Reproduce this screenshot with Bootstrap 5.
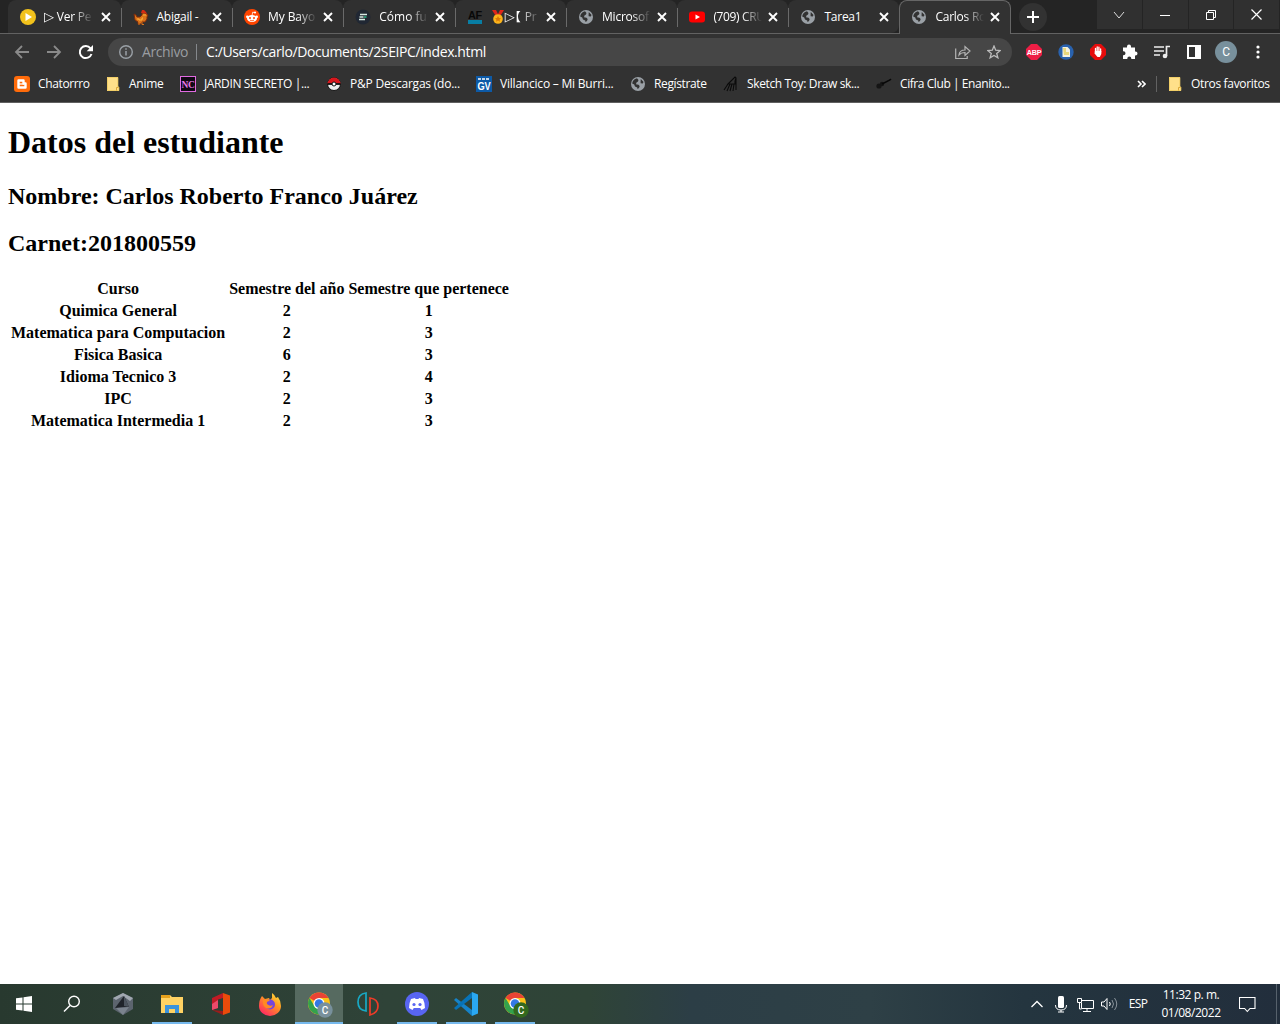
<!DOCTYPE html>
<html lang="es">
<head>
<meta charset="utf-8">
<title>Carlos Roberto Franco</title>
<link rel="stylesheet" href="https://cdn.jsdelivr.net/npm/bootstrap@5.3.0/dist/css/bootstrap.min.css">
<style>
body{width:1280px;height:1024px;font-family:"Open Sans","Noto Sans",sans-serif;font-size:12px;line-height:16px;color:#fff;background:#fff;letter-spacing:-.25px}
svg{display:block;flex:none}
.strip{height:34px;background:#242424;padding-left:8px;box-shadow:inset 0 -1px #626262}
.tab{width:111.4px;height:33px;background:#303030;border-radius:8px 8px 0 0;padding:0 10px 0 12px}
.tab::after{content:"";position:absolute;right:-1px;top:8px;width:1px;height:19px;background:#6a6a6a;z-index:1}
.tab.pre::after,.tab.current::after{display:none}
.tab.pre{border-bottom-right-radius:8px;width:111px}
.tab.current{width:112px;height:34px;border:1px solid #666;border-bottom:0;background:#323232;padding:0 10px 1px 11px}
.tab .ttl{width:49px;margin-left:8px;-webkit-mask-image:linear-gradient(90deg,#000 60%,transparent)}
.tab .ttl.full{-webkit-mask-image:none}
.tri{font-family:"DejaVu Sans",sans-serif;font-size:13px;letter-spacing:0}
.lent{font-family:"Noto Sans CJK JP",sans-serif;font-size:12px;font-feature-settings:"halt";letter-spacing:0;line-height:16px}
.plus{width:28px;height:28px;background:#323232;margin:3px 0 0 8px}
.caps{width:183px;height:29px;gap:1px;padding-right:1px}
.caps span{flex:1;background:#303030}
.tools{height:35px;background:#323232}
.omni{width:904px;height:28px;background:#464646;font-size:14px;line-height:20px;letter-spacing:-.4px;padding:0 11px 0 10px}
.omni .scheme{color:#9a9da1;margin-left:8px;width:54px}
.omni i{width:1px;height:16px;background:#85888c;margin-right:9px}
.marks{height:34px;background:#323232;border-bottom:1px solid #606060;padding:0 10px 3px 14px}
.mk{gap:8px}
.w91{width:91px}.w75{width:75px}.w146{width:146px}.w150{width:150px}.w154{width:154px}.w93{width:93px}.w153{width:153px}
.tight{letter-spacing:-.37px}
.page{color:#000;font-family:"Liberation Serif",serif;letter-spacing:0;padding:0 8px}
.page h1{font-size:32px;line-height:37px;font-weight:700;margin:21px 0 22px}
.page h2{font-size:24px;line-height:27px;font-weight:700;margin:0 0 20px}
.grades{border-collapse:separate;border-spacing:2px;font-size:16px;line-height:18px;text-align:center}
.grades th{padding:1px;white-space:nowrap}
.taskbar{height:40px;background:linear-gradient(90deg,#28392f,#2f4338 30%,#2f4437 46%,#2c3e46 54%,#2e4046 68%,#24353f 80%,#222e3c)}
.slot{width:49px;height:40px;position:relative}
.slot.w48{width:48px}
.slot.open::after{content:"";position:absolute;left:4px;right:5px;bottom:0;height:2px;background:#76b9ed}
.slot.on{background:#566a60;width:48px}
.slot.on::after{left:0;right:0}
.clock{width:76px;line-height:18px;letter-spacing:-.45px}
.edge{border-left:1px solid #56616c;width:4px;height:40px}
</style>
<script src="https://cdn.jsdelivr.net/npm/bootstrap@5.3.0/dist/js/bootstrap.bundle.min.js"></script>
</head>
<body class="d-flex flex-column overflow-hidden">
<svg width="0" height="0" class="position-absolute">
<symbol id="x" viewBox="0 0 10 10"><path d="M1 1l8 8M9 1L1 9" stroke="#fff" stroke-width="1.9"/></symbol>
<symbol id="globe" viewBox="0 0 16 16"><circle cx="8" cy="8" r="7" fill="#9aa0a6"/><path d="M7 2.200L8.500 4 8 5.500 6.500 6.500 6 8.200 8.500 8.800 9.700 10 9 12 7.500 13 7.200 11.500 5 10.500 4.200 8.500 2.200 7.500Q2.500 3.600 7 2.200zM10.800 3L13.500 6 12.800 7.600 10.600 7.300 10.600 5z" fill="#323232"/></symbol>
<symbol id="folder" viewBox="0 0 16 16"><path d="M1 1h11v10h1v4H1z" fill="#ffe08a"/><path d="M1.500 1.500h10.300v9.500h1v3.500H1.500z" fill="none" stroke="#f2cf68"/><path d="M10.500 14.500v-3h2" fill="none" stroke="#dba93a"/></symbol>
<symbol id="chrome" viewBox="0 0 24 24"><circle cx="12" cy="12" r="11" fill="#fbc116"/><path d="M12 12L2.500 6.500A11 11 0 0 1 21.500 6.500H12z" fill="#ea4335"/><path d="M2.500 6.500A11 11 0 0 0 12 23l4.500-8.300L12 12 7.500 14.700z" fill="#34a24c"/><circle cx="12" cy="12" r="5.500" fill="#fff"/><circle cx="12" cy="12" r="4.300" fill="#3478e5"/></symbol>
</svg>

<header class="strip d-flex flex-none">
<div class="tab d-flex align-items-center position-relative" style="width:112.5px"><svg width="16" height="16"><circle cx="8" cy="8" r="8" fill="#f2c21c"/><path d="M5.500 4L12 8l-6.500 4z" fill="#fff"/></svg><span class="ttl text-nowrap"><span class="tri">▷</span> Ver Pe</span><svg class="ms-auto" width="10" height="10"><use href="#x"/></svg></div>
<div class="tab d-flex align-items-center position-relative"><svg width="16" height="16"><path d="M1 5l2 1 1 2h3l2-2V4h3l3 2-1 2v2l-2 3H9l-1 2H5v-2l-3-2z" fill="#d9731a" stroke="#7a2b0c"/><path d="M8 4l1-3h2l2 2 1 2-3-1z" fill="#d52a12"/><path d="M4 10h2v1h3V9h1M10 6h1M12 5v2" fill="none" stroke="#ffb03b"/><path d="M6 13v3M9 13v2.500h2" fill="none" stroke="#d9731a"/></svg><span class="ttl full text-nowrap">Abigail -</span><svg class="ms-auto" width="10" height="10"><use href="#x"/></svg></div>
<div class="tab d-flex align-items-center position-relative"><svg width="16" height="16"><circle cx="8" cy="8" r="8" fill="#ff4500"/><ellipse cx="8" cy="9.500" rx="5" ry="3.500" fill="#fff"/><circle cx="3.300" cy="7.700" r="1.300" fill="#fff"/><circle cx="12.700" cy="7.700" r="1.300" fill="#fff"/><circle cx="11" cy="3.500" r="1.100" fill="#fff"/><path d="M8 6.500l.7-3.300 2 .4" stroke="#fff" fill="none" stroke-width=".8"/><circle cx="6" cy="9" r="1" fill="#ff4500"/><circle cx="10" cy="9" r="1" fill="#ff4500"/><path d="M6 11.200q2 1.200 4 0" stroke="#ff4500" fill="none" stroke-width=".8"/></svg><span class="ttl text-nowrap" style="letter-spacing:-.05px">My Bayo</span><svg class="ms-auto" width="10" height="10"><use href="#x"/></svg></div>
<div class="tab d-flex align-items-center position-relative"><svg width="16" height="16"><circle cx="8" cy="8" r="7.500" fill="#202733"/><path d="M5 5.500h7M4.500 8h4M4 10.500h6" stroke="#d6eae4" stroke-width="1.500"/><path d="M9 8h2.500" stroke="#2bb58a" stroke-width="1.500"/></svg><span class="ttl text-nowrap" style="letter-spacing:0">Cómo fu</span><svg class="ms-auto" width="10" height="10"><use href="#x"/></svg></div>
<div class="tab d-flex align-items-center position-relative"><svg width="16" height="16"><text x="1" y="10" textLength="14" lengthAdjust="spacingAndGlyphs" font-family="Liberation Sans" font-weight="700" font-size="11" fill="#080808">AF</text><path d="M1 11h14v4H1z" fill="#087ea4"/></svg><span class="ttl text-nowrap d-flex align-items-center"><svg width="14" height="16"><path d="M1 1h4l3 6-2 2zM13 1H9L6 7l2 2z" fill="#df2519"/><circle cx="7" cy="10" r="4.800" fill="#fbb31a"/><path d="M7 7l1 2 2 .2-1.500 1.500.5 2L7 11.500l-2 1.200.5-2L4 9.200 6 9z" fill="#d97706"/></svg><span class="tri">▷</span><span class="lent">【</span><span style="margin-left:4px">Pr</span></span><svg class="ms-auto" width="10" height="10"><use href="#x"/></svg></div>
<div class="tab d-flex align-items-center position-relative"><svg width="16" height="16"><use href="#globe"/></svg><span class="ttl text-nowrap">Microsof</span><svg class="ms-auto" width="10" height="10"><use href="#x"/></svg></div>
<div class="tab d-flex align-items-center position-relative" style="width:111px"><svg width="16" height="16"><rect y="2.500" width="16" height="11" rx="3" fill="#f00"/><path d="M6.500 5.500L11 8l-4.500 2.500z" fill="#fff"/></svg><span class="ttl text-nowrap tight">(709) CRU</span><svg class="ms-auto" width="10" height="10"><use href="#x"/></svg></div>
<div class="tab pre d-flex align-items-center position-relative"><svg width="16" height="16"><use href="#globe"/></svg><span class="ttl full text-nowrap">Tarea1</span><svg class="ms-auto" width="10" height="10"><use href="#x"/></svg></div>
<div class="tab current d-flex align-items-center position-relative"><svg width="16" height="16"><use href="#globe"/></svg><span class="ttl text-nowrap">Carlos Ro</span><svg class="ms-auto" width="10" height="10"><use href="#x"/></svg></div>
<div class="plus rounded-circle d-flex align-items-center justify-content-center"><svg width="12" height="12"><path d="M6 0v12M0 6h12" stroke="#fff" stroke-width="2"/></svg></div>
<div class="caps d-flex ms-auto">
<span class="d-flex align-items-center justify-content-center"><svg width="12" height="12"><path d="M1 3l5 6 5-6" fill="none" stroke="#ddd"/></svg></span>
<span class="d-flex align-items-center justify-content-center"><svg width="10" height="10"><path d="M0 5.500h10" stroke="#fff"/></svg></span>
<span class="d-flex align-items-center justify-content-center"><svg width="10" height="10"><path d="M.5 2.500h7v7h-7zM2.500 2.500v-2h7v7h-2" fill="none" stroke="#fff"/></svg></span>
<span class="d-flex align-items-center justify-content-center"><svg width="11" height="11"><path d="M.5.5l10 10M10.500.5l-10 10" stroke="#fff" stroke-width="1.200"/></svg></span>
</div>
</header>

<nav class="tools d-flex align-items-center flex-none">
<div class="d-flex align-items-center" style="width:108px;padding-left:14px;gap:16px">
<svg width="16" height="16"><path d="M15 8H2M8 2L2 8l6 6" fill="none" stroke="#8a8a8a" stroke-width="1.800"/></svg>
<svg width="16" height="16"><path d="M1 8h13M8 2l6 6-6 6" fill="none" stroke="#8a8a8a" stroke-width="1.800"/></svg>
<svg width="16" height="16"><path d="M13.500 10A6 6 0 1 1 12.500 4.300" fill="none" stroke="#fff" stroke-width="2"/><path d="M15 1v6.300H8.700z" fill="#fff"/></svg>
</div>
<div class="omni rounded-pill d-flex align-items-center">
<svg width="16" height="16"><circle cx="8" cy="8" r="6.300" fill="none" stroke="#9aa0a6" stroke-width="1.400"/><path d="M8 7v4.500M8 4.300v1.500" stroke="#9aa0a6" stroke-width="1.500"/></svg><span class="scheme">Archivo</span><i></i><span>C:/Users/carlo/Documents/2SEIPC/index.html</span>
<svg class="ms-auto" width="16" height="16"><path d="M.7 4.500v10h11.500V12M4 11q.5-5 6-5V2.500l5 4.500-5 4.500V8.500Q6 8.500 4 11z" fill="none" stroke="#b4b4b4" stroke-width="1.200"/></svg>
<svg style="margin-left:16px" width="14" height="14"><path d="M7 1l1.700 4.200 4.500.3-3.500 2.900 1.200 4.400L7 10.400l-3.900 2.400 1.200-4.400L.8 5.500l4.500-.3z" fill="none" stroke="#bbb" stroke-width="1.300"/></svg>
</div>
<div class="d-flex align-items-center" style="margin-left:14px;gap:16px">
<svg width="16" height="16"><path d="M5 0h6l5 5v6l-5 5H5l-5-5V5z" fill="#ed1e45"/><text x="8" y="11" text-anchor="middle" textLength="14.500" lengthAdjust="spacingAndGlyphs" font-size="8" font-weight="700" fill="#fff" font-family="Liberation Sans">ABP</text></svg>
<svg width="16" height="16"><circle cx="8" cy="8" r="7.700" fill="#2962ae"/><path d="M4.500 3h5l2.500 2.500V13H4.500z" fill="#f4f1df"/><path d="M5 4h3v4h3v3H6z" fill="#e7d77b"/></svg>
<svg width="16" height="16"><path d="M5 0h6l5 5v6l-5 5H5l-5-5V5z" fill="#e60c0c"/><path d="M5.500 8V4.500M7.200 8V3M8.900 8V3.200M10.600 8V5" stroke="#fff" stroke-width="1.300" stroke-linecap="round"/><path d="M4.900 7h6.400v3l-1.500 3H7.500L4.500 9.500z" fill="#fff"/></svg>
<svg width="16" height="16"><path d="M1 3.500h4V2.500a2 2 0 0 1 4 0v1h4v4h.5a2 2 0 0 1 0 4H13v3.500H9.300V14.500a2 2 0 0 0-4 0v.5H1v-3.700h.5a2 2 0 0 0 0-4H1z" fill="#fff"/></svg>
<svg width="16" height="16"><path d="M0 3h10M0 7h10M0 11h6M12.500 12V2.500h3.500" stroke="#eee" stroke-width="1.700" fill="none"/><circle cx="11" cy="12" r="2.300" fill="#eee"/></svg>
<svg width="16" height="16"><path d="M2 2h12v12H2z" fill="none" stroke="#fff" stroke-width="2"/><path d="M9 1h6v14H9z" fill="#fff"/></svg>
</div>
<svg style="margin-left:13px" width="22" height="22"><circle cx="11" cy="11" r="11" fill="#78909c"/><text x="11" y="15.200" text-anchor="middle" font-size="12" fill="#fff" font-family="Roboto">C</text></svg>
<svg style="margin-left:19px" width="4" height="16"><circle cx="2" cy="3" r="1.600" fill="#fff"/><circle cx="2" cy="8" r="1.600" fill="#fff"/><circle cx="2" cy="13" r="1.600" fill="#fff"/></svg>
</nav>

<nav class="marks d-flex align-items-center flex-none text-nowrap">
<div class="mk w91 d-flex tight"><svg width="16" height="16"><rect width="16" height="16" rx="3" fill="#ff6b0a"/><path d="M4.500 4.500h5v3h2v4h-7z" fill="none" stroke="#fff" stroke-width="2.400" stroke-linejoin="round"/><path d="M5 8h5" stroke="#fff" stroke-width="1.300"/></svg>Chatorrro</div>
<div class="mk w75 d-flex"><svg width="16" height="16"><use href="#folder" x="1"/></svg>Anime</div>
<div class="mk w146 d-flex tight"><svg width="16" height="16"><rect x=".5" y=".5" width="15" height="15" fill="#100914" stroke="#e06be0"/><text x="8" y="12" text-anchor="middle" textLength="13" lengthAdjust="spacingAndGlyphs" font-family="Liberation Serif" font-weight="700" font-size="11" fill="#e77ae7">NC</text></svg>JARDIN SECRETO |...</div>
<div class="mk w150 d-flex" style="letter-spacing:-.22px"><svg width="16" height="16"><circle cx="8" cy="8" r="6.500" fill="#eee" stroke="#151515"/><path d="M1.500 8a6.500 6.500 0 0 1 13 0z" fill="#d9161c"/><path d="M1.500 8h13" stroke="#111" stroke-width="1.800"/><circle cx="8" cy="8" r="2" fill="#fff" stroke="#111"/></svg>P&amp;P Descargas (do...</div>
<div class="mk w154 d-flex" style="letter-spacing:-.21px"><svg width="16" height="16"><path d="M0 0h16v16H0z" fill="#0d5aa7"/><path d="M2 3h12" stroke="#fff" stroke-width="1.500" stroke-dasharray="3 1"/><text x="8" y="13.500" text-anchor="middle" textLength="13" lengthAdjust="spacingAndGlyphs" font-family="Liberation Sans" font-weight="700" font-size="11" fill="#fff">GV</text></svg>Villancico – Mi Burri...</div>
<div class="mk w93 d-flex"><svg width="16" height="16"><use href="#globe"/></svg><span class="tight">Regístrate</span></div>
<div class="mk w153 d-flex tight"><svg width="16" height="16"><path d="M6 7l6-6 1 1-1 3v3H5zM5 8l-4 6M7 8l-3 7M9 8l-2 7M11 8l-1 7M13 2v12" fill="none" stroke="#0b0b0b" stroke-width="1.100"/></svg>Sketch Toy: Draw sk...</div>
<div class="mk d-flex" style="letter-spacing:-.43px"><svg width="16" height="16"><circle cx="3" cy="10" r="2.600" fill="#151515"/><circle cx="6" cy="8" r="2.200" fill="#151515"/><path d="M6 8l8-4 1-1" stroke="#080808" stroke-width="1.500"/></svg>Cifra Club | Enanito...</div>
<svg class="ms-auto" width="9" height="8"><path d="M1 1l3 3-3 3M5 1l3 3-3 3" fill="none" stroke="#fff" stroke-width="1.600"/></svg>
<span style="width:1px;height:16px;background:#626262;margin:0 10px"></span>
<div class="mk w-auto d-flex"><svg width="16" height="16"><use href="#folder" x="1"/></svg><span style="width:79px;letter-spacing:-.33px">Otros favoritos</span></div>
</nav>

<main class="page flex-grow-1">
<h1>Datos del estudiante</h1>
<h2>Nombre: Carlos Roberto Franco Juárez</h2>
<h2>Carnet:201800559</h2>
<table class="grades">
<tr><th>Curso</th><th>Semestre del año</th><th>Semestre que pertenece</th></tr>
<tr><th>Quimica General</th><th>2</th><th>1</th></tr>
<tr><th>Matematica para Computacion</th><th>2</th><th>3</th></tr>
<tr><th>Fisica Basica</th><th>6</th><th>3</th></tr>
<tr><th>Idioma Tecnico 3</th><th>2</th><th>4</th></tr>
<tr><th>IPC</th><th>2</th><th>3</th></tr>
<tr><th>Matematica Intermedia 1</th><th>2</th><th>3</th></tr>
</table>
</main>

<footer class="taskbar d-flex align-items-center flex-none">
<div class="slot w48 d-flex align-items-center justify-content-center"><svg width="16" height="16"><path d="M0 2.300L6.500 1.400v6.100H0zM7.500 1.200L16 0v7.500H7.500zM0 8.500h6.500v6.100L0 13.700zM7.500 8.500H16V16l-8.500-1.200z" fill="#fff"/></svg></div>
<div class="slot w48 d-flex align-items-center justify-content-center"><svg width="18" height="18"><circle cx="11" cy="6.500" r="5.300" fill="none" stroke="#fff" stroke-width="1.400"/><path d="M7 10.500l-6 6" stroke="#fff" stroke-width="1.500"/></svg></div>
<div class="slot d-flex align-items-center justify-content-center" style="margin-left:3px"><svg width="22" height="22" style="margin-right:2px"><path d="M11 0l10 5v11l-10 6-10-6V5z" fill="#5c646e"/><path d="M11 0l10 5-3 3-7-5-7 4-3-2z" fill="#a0a7b0"/><path d="M12 3l5 11-14 1z" fill="#20242b"/><path d="M12 3l5 11-5-1z" fill="#4c545e"/><path d="M4 15l13-1-6 8z" fill="#7b838e"/></svg></div>
<div class="slot open d-flex align-items-center justify-content-center"><svg width="22" height="20" style="margin-right:2px"><path d="M0 1h9l2 2h11v16H0z" fill="#ffd263"/><path d="M0 1h9v3H0z" fill="#e5a11c"/><path d="M4 19v-8h14v8h-4v-4H8v4z" fill="#3b93dc"/></svg></div>
<div class="slot d-flex align-items-center justify-content-center"><svg width="18" height="22" style="margin-right:2px"><path d="M0 5L11 0v5L6 6.500V15l-6 2z" fill="#c01b25"/><path d="M0 11l6-4v8l-6 2z" fill="#ec4a6a"/><path d="M0 17l11 1v4z" fill="#9c1b1b"/><path d="M11 0l7 2.500v17L11 22z" fill="#eb4b0b"/></svg></div>
<div class="slot d-flex align-items-center justify-content-center"><svg width="24" height="24" style="margin-right:2px"><defs><linearGradient id="ff" x1="1" x2=".3" y2="1"><stop stop-color="#fff34a"/><stop offset=".45" stop-color="#ff9820"/><stop offset="1" stop-color="#ff2a62"/></linearGradient></defs><path d="M4 4l3 3 4-1 1 2 2-2 0-5q3 2 4 5l2-1q3 4 3 9a11 10 0 0 1-22 0Q1 8 4 4z" fill="url(#ff)"/><circle cx="12" cy="12.500" r="5" fill="#7546dc"/><path d="M5 8q5-2 7 1-4 0-3 3 3 3 6 1-2 5-7 3-4-3-3-8z" fill="#ff8a22"/></svg></div>
<div class="slot open on d-flex align-items-center justify-content-center"><svg width="28" height="28"><use href="#chrome" x="2" y="1.500" width="24" height="24"/><circle cx="20" cy="20" r="7.700" fill="#78909c"/><text x="20" y="23.500" text-anchor="middle" font-family="Roboto" font-size="10" font-weight="500" fill="#fff">C</text></svg></div>
<div class="slot d-flex align-items-center justify-content-center"><svg width="22" height="24"><path d="M9 1v18Q1 18 1 10T9 1z" fill="none" stroke="#18a9c5" stroke-width="1.700"/><path d="M13 6v17q8-2 8-9T13 6z" fill="none" stroke="#ee3b28" stroke-width="1.700"/></svg></div>
<div class="slot open d-flex align-items-center justify-content-center" style="margin-left:1px"><svg width="24" height="24" style="margin-right:1px"><circle cx="12" cy="12" r="12" fill="#5865f2"/><path d="M6 7l4-1 .5 1h3L14 6l4 1q2 4 2 9l-3.500 2-1.300-2H8.800l-1.300 2L4 16q0-5 2-9z" fill="#fff"/><circle cx="9" cy="12.500" r="1.600" fill="#5865f2"/><circle cx="15" cy="12.500" r="1.600" fill="#5865f2"/></svg></div>
<div class="slot open d-flex align-items-center justify-content-center"><svg width="24" height="24" style="margin-right:1px"><path d="M0 8l2-2 16 12v6z" fill="#1683c9"/><path d="M0 16l2 2L18 6V0z" fill="#0873b7"/><path d="M18 0l6 2.500v19L18 24z" fill="#2aa8f2"/></svg></div>
<div class="slot open d-flex align-items-center justify-content-center"><svg width="28" height="28" style="margin-right:1px"><use href="#chrome" x="2" y="1.500" width="24" height="24"/><circle cx="20" cy="20" r="7.700" fill="#33691e"/><text x="20" y="23.500" text-anchor="middle" font-family="Roboto" font-size="10" font-weight="500" fill="#fff">C</text></svg></div>
<div class="d-flex align-items-center ms-auto">
<svg width="12" height="8"><path d="M.5 7L6 1.500 11.500 7" fill="none" stroke="#fff" stroke-width="1.300"/></svg>
<svg style="margin-left:12px" width="12" height="17"><rect x="3" y="0" width="6" height="12" rx="1.500" fill="#fff"/><path d="M.5 9q0 5 5.500 5t5.500-5M6 14v2M3 16h6" fill="none" stroke="#fff"/></svg>
<svg style="margin-left:10px" width="17" height="15"><path d="M5 3.500h11.500v8H4.500V6M10 12v2.500M6 14.500h8M.5 1.500h4v4h-4zM2.500 5.500V12h2" fill="none" stroke="#fff"/></svg>
<svg style="margin-left:7px" width="17" height="14"><path d="M.5 5h2.500l3-3.500v11L3 9H.5z" fill="none" stroke="#fff"/><path d="M8.500 5q1.500 2 0 4" fill="none" stroke="#fff"/><path d="M11 3q3 4 0 8M13.500 1q4.500 6 0 12" fill="none" stroke="#89939b"/></svg>
<span class="text-center" style="width:20px;margin:0 5px 0 10px;letter-spacing:-.7px">ESP</span>
<div class="clock text-center">11:32 p. m.<br>01/08/2022</div>
<svg style="margin:0 20px 0 10px" width="17" height="17"><path d="M.5 1.500h15.500v11h-5l-2.700 3-2.700-3H.5z" fill="none" stroke="#fff" stroke-width="1.100"/></svg>
<div class="edge"></div>
</div>
</footer>
</body>
</html>
